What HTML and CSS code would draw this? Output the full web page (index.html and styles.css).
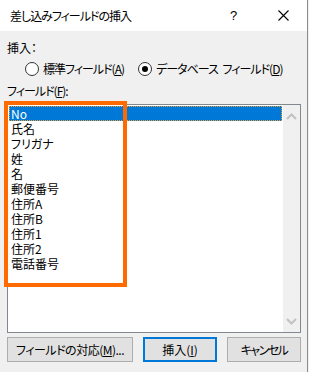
FILE: index.html
```html
<!DOCTYPE html>
<html lang="ja">
<head>
    <meta charset="UTF-8">
    <meta name="viewport" content="width=device-width, initial-scale=1.0">
    <title>差し込みフィールドの挿入</title>
    <link rel="stylesheet" href="styles.css">
</head>
<body>
    <div class="dialog">
        <div class="titlebar">
            <span class="title">差し込みフィールドの挿入</span>
            <span class="help">?</span>
            <span class="close">
                <svg width="11" height="11" viewBox="0 0 11 11"><path d="M0.5 0.5 L10.5 10.5 M10.5 0.5 L0.5 10.5" stroke="#000" stroke-width="1.1" fill="none"/></svg>
            </span>
        </div>

        <div class="content">
            <div class="label insert-label">挿入：</div>
            <div class="radios">
                <label class="radio"><span class="circle"></span><span>標準フィールド(<u>A</u>)</span></label>
                <label class="radio"><span class="circle checked"></span><span>データベース フィールド(<u>D</u>)</span></label>
            </div>
            <div class="label field-label">フィールド(<u>F</u>):</div>

            <div class="listbox">
                <ul class="items">
                    <li class="selected">No</li>
                    <li>氏名</li>
                    <li>フリガナ</li>
                    <li>姓</li>
                    <li>名</li>
                    <li>郵便番号</li>
                    <li>住所A</li>
                    <li>住所B</li>
                    <li>住所1</li>
                    <li>住所2</li>
                    <li>電話番号</li>
                </ul>
                <div class="scrollbar">
                    <svg width="11" height="7" viewBox="0 0 11 7"><path d="M1 6 L5.5 1.5 L10 6" stroke="#c2c2c2" stroke-width="2" fill="none"/></svg>
                    <svg width="11" height="7" viewBox="0 0 11 7"><path d="M1 1 L5.5 5.5 L10 1" stroke="#c2c2c2" stroke-width="2" fill="none"/></svg>
                </div>
            </div>

            <div class="buttons">
                <button class="btn wide">フィールドの対応(<u>M</u>)...</button>
                <button class="btn default">挿入(<u>I</u>)</button>
                <button class="btn narrow-text">キャンセル</button>
            </div>
        </div>

        <div class="highlight"></div>
    </div>
</body>
</html>
```

FILE: styles.css
```css
body { margin: 0; background: #f0f0f0; font-family: "Noto Sans CJK JP", "Noto Sans", sans-serif; font-size: 12px; color: #000; font-feature-settings: "palt"; }
.dialog { position: relative; width: 307px; height: 372px; background: #f0f0f0; border-right: 1px solid #8c8c8c; }

.titlebar { height: 31px; background: #fff; display: flex; align-items: center; }
.title { margin-left: 10px; flex: 1; letter-spacing: -1px; }
.help { width: 10px; margin-right: 38px; font-size: 13px; font-family: "Liberation Sans", sans-serif; }
.close { width: 11px; height: 11px; margin-right: 18px; display: flex; }

.content { padding: 0 6px 0 7px; }
.label { height: 16px; line-height: 16px; white-space: nowrap; }
.insert-label { margin-top: 9px; }
.radios { display: flex; gap: 14px; margin-top: 5px; margin-left: 18px; height: 16px; align-items: center; white-space: nowrap; letter-spacing: -1px; word-spacing: 3px; }
.radio { display: flex; align-items: center; gap: 4px; line-height: 16px; }
.circle { flex: none; width: 12px; height: 12px; border: 1px solid #333; border-radius: 50%; background: #fff; box-sizing: content-box; position: relative; }
.circle.checked::after { content: ""; position: absolute; left: 3px; top: 3px; width: 6px; height: 6px; border-radius: 50%; background: #000; }
.field-label { margin-top: 6px; letter-spacing: -1px; }

.listbox { margin-top: 5px; height: 227px; border: 1px solid #828790; background: #fff; display: flex; }
.items { list-style: none; margin: 0; padding: 1px; flex: 1; }
.items li { height: 15px; line-height: 15px; padding-left: 2px; }
.items li.selected { background: #0078d7; color: #fff; outline: 1px dotted #f0a030; outline-offset: -1px; }
.scrollbar { width: 17px; background: #f0f0f0; display: flex; flex-direction: column; justify-content: space-between; align-items: center; padding: 8px 0 7px; }

.buttons { display: flex; gap: 10px; margin-top: 4px; }
.btn { height: 25px; width: 74px; padding: 0; font: inherit; background: #e1e1e1; border: 1px solid #adadad; color: #000; white-space: nowrap; }
.btn.wide { width: 126px; letter-spacing: -0.5px; }
.btn.narrow-text { letter-spacing: -1.5px; }
.btn.default { border: 2px solid #0078d7; }

.highlight { position: absolute; left: 4px; top: 101px; width: 123px; height: 186px; box-sizing: border-box; border: 4px solid #ff6a00; }
```
